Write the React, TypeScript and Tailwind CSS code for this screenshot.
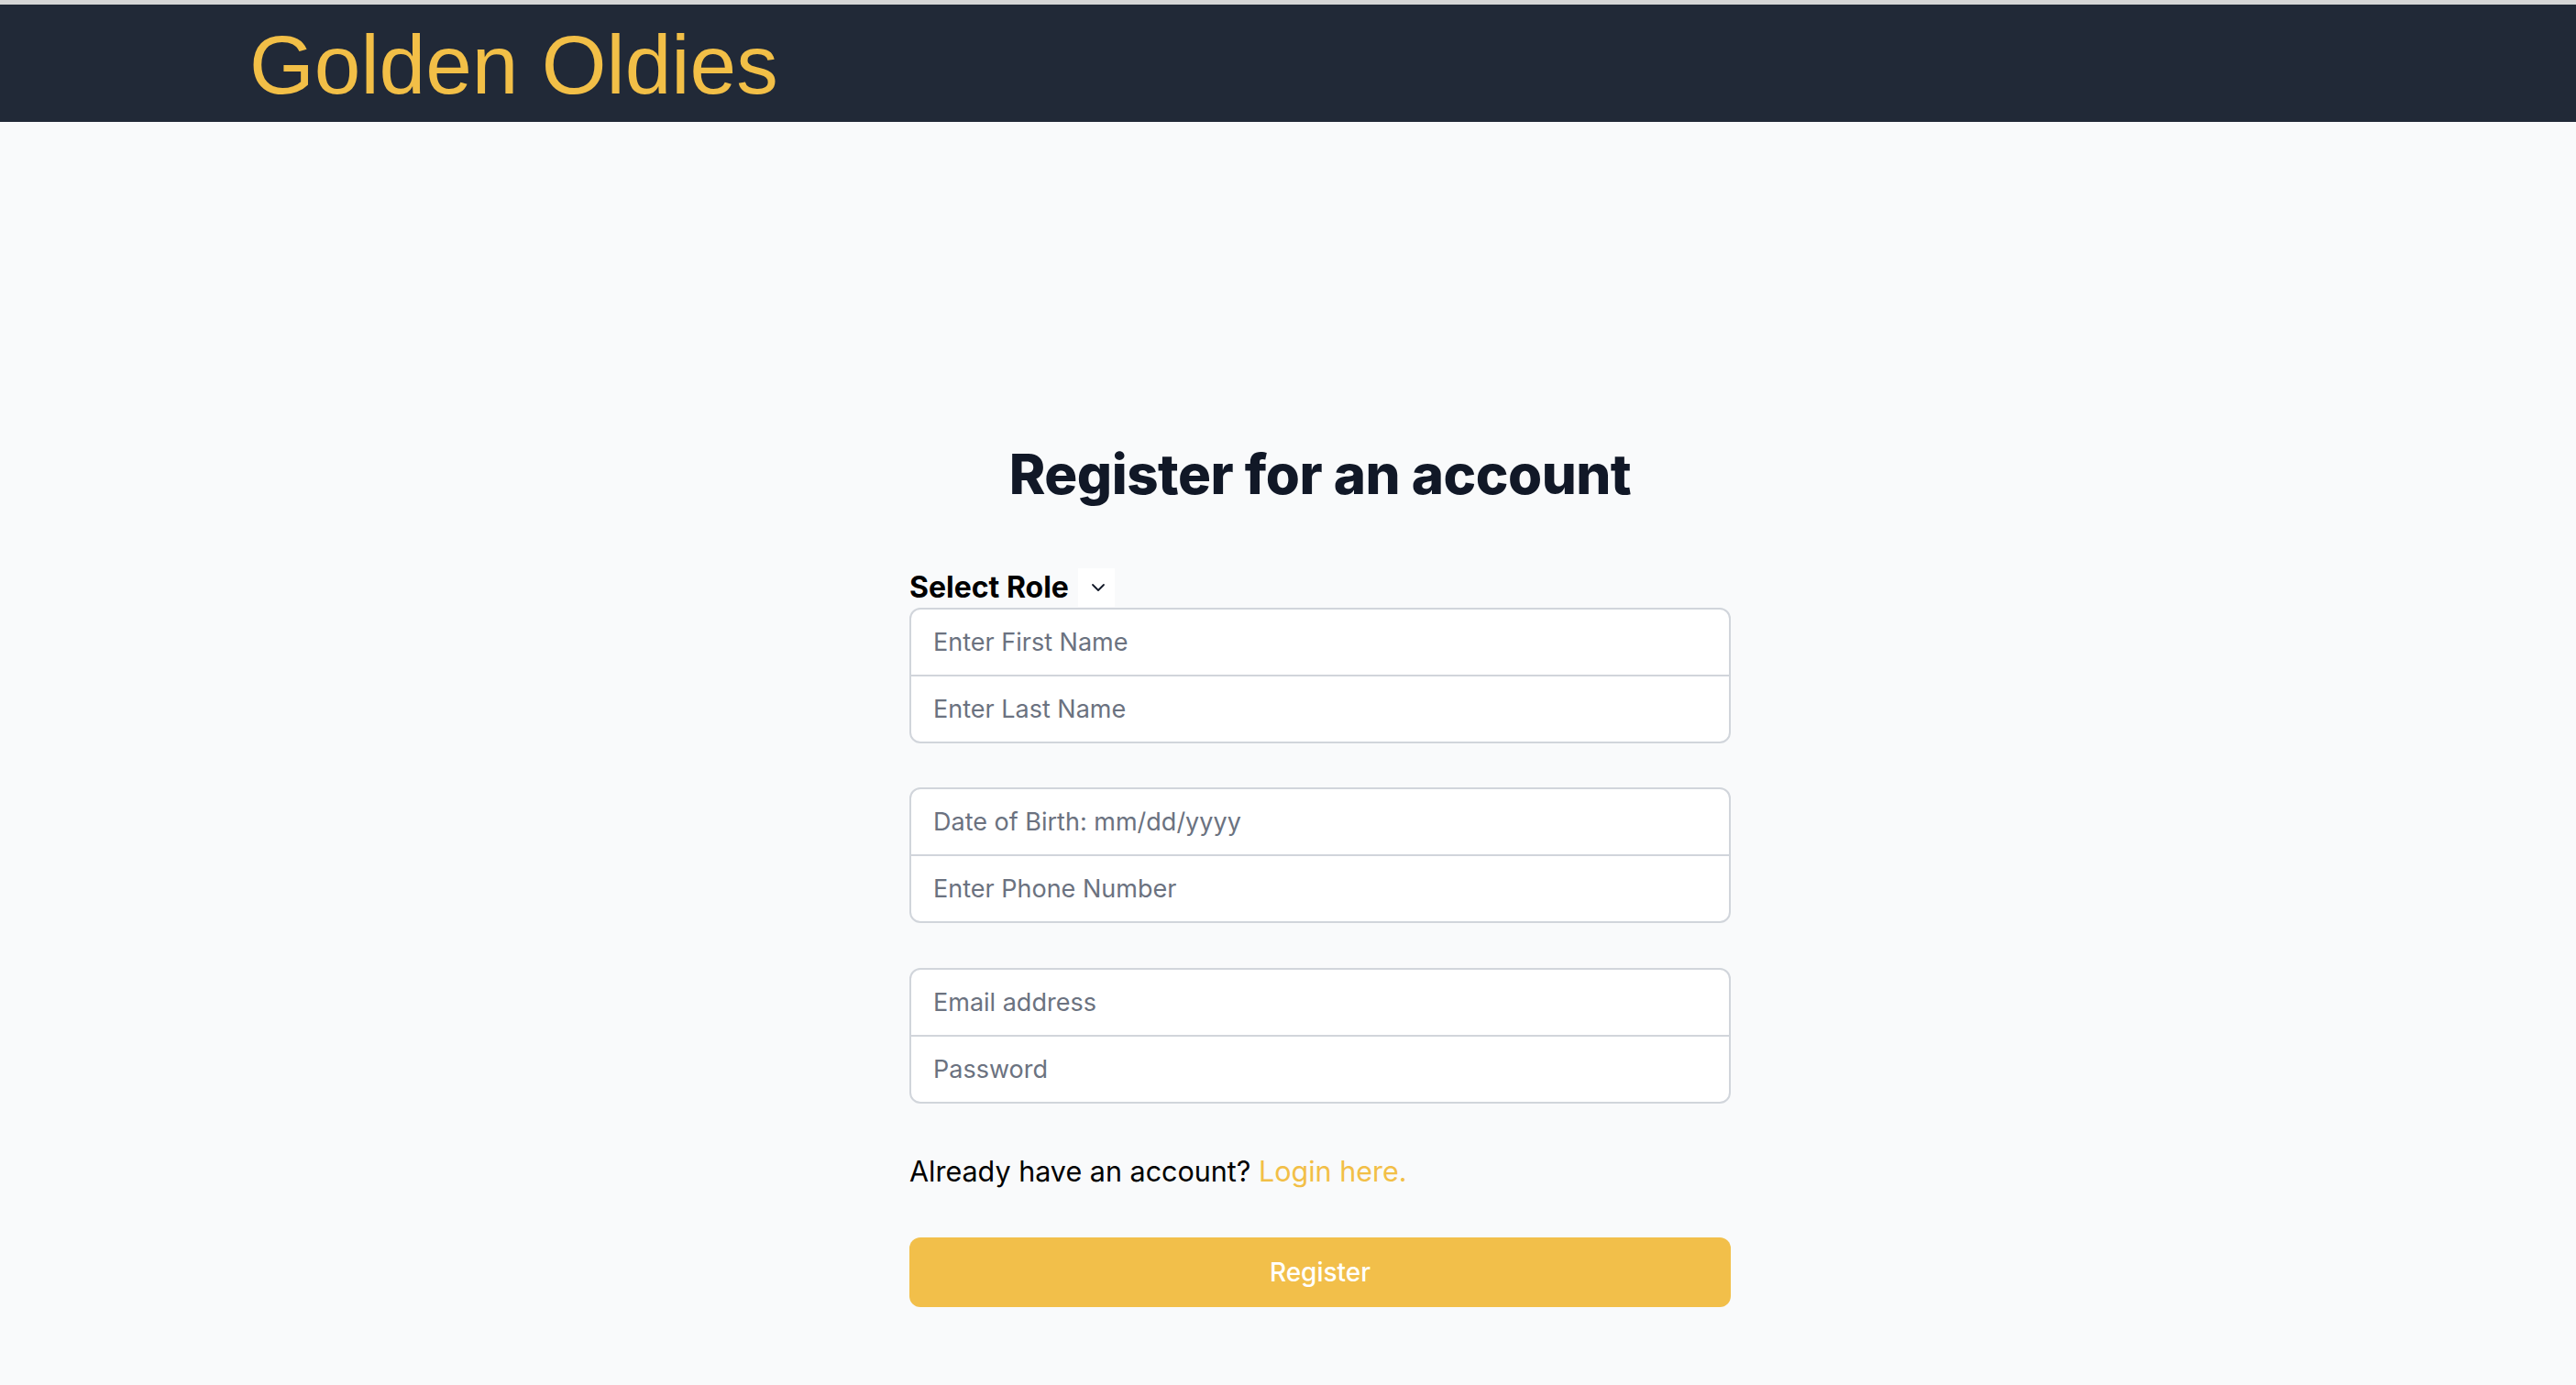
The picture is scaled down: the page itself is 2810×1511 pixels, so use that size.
import { useState } from "react";

const inter = { fontFamily: "Inter, 'Noto Sans', sans-serif" };

function Field({
  placeholder,
  type = "text",
  first,
}: {
  placeholder: string;
  type?: string;
  first?: boolean;
}) {
  return (
    <input
      type={type}
      placeholder={placeholder}
      className={
        "block w-full h-[75px] px-[24px] bg-white border-2 border-[#d1d5db] text-[27px] leading-[40px] text-[#111827] placeholder:text-[#6b7280] outline-none focus:relative focus:z-10 focus:border-[#f2bf4a] " +
        (first ? "rounded-t-[12px]" : "-mt-[2px] rounded-b-[12px]")
      }
    />
  );
}

export default function App() {
  const [role, setRole] = useState("");

  return (
    <div className="min-h-screen bg-[#f9fafb]" style={inter}>
      <div className="h-[5px] bg-[#d6d6d6]" />
      <header className="h-[128px] bg-[#212937] flex items-center pl-[272px]">
        <h1
          className="text-[91px] leading-none pt-[2px] text-[#f2bf47]"
          style={{ fontFamily: "'Liberation Sans', Arial, sans-serif" }}
        >
          Golden Oldies
        </h1>
      </header>

      <main className="flex justify-center pl-[70px] pt-[348px] pb-[80px]">
        <div className="w-[896px] flex flex-col">
          <h2 className="text-center text-[60px] leading-[72px] font-extrabold tracking-[-0.5px] text-[#111827]">
            Register for an account
          </h2>

          <form
            className="mt-[67px] flex flex-col"
            onSubmit={(e) => e.preventDefault()}
          >
            <div className="flex items-center h-[42px]">
              <span className="text-[32px] leading-[42px] font-bold text-black">
                Select Role
              </span>
              <div
                className="ml-[10px] w-[40px] h-[42px] pl-[4px] bg-white flex items-center justify-center cursor-pointer"
                onClick={() => setRole(role ? "" : "user")}
              >
                <svg
                  width="16"
                  height="10"
                  viewBox="0 0 16 10"
                  fill="none"
                  stroke="#111827"
                  strokeWidth="1.8"
                  strokeLinecap="round"
                  strokeLinejoin="round"
                >
                  <path d="M2 2l6 6 6-6" />
                </svg>
              </div>
            </div>

            <div className="mt-px">
              <Field placeholder="Enter First Name" first />
              <Field placeholder="Enter Last Name" />
            </div>

            <div className="mt-[48px]">
              <Field placeholder="Date of Birth: mm/dd/yyyy" first />
              <Field placeholder="Enter Phone Number" type="tel" />
            </div>

            <div className="mt-[49px]">
              <Field placeholder="Email address" type="email" first />
              <Field placeholder="Password" type="password" />
            </div>

            <p className="mt-[52px] text-[30.5px] leading-[44px] text-black">
              Already have an account?{" "}
              <a href="#" className="text-[#f2bf47]">
                Login here.
              </a>
            </p>

            <button
              type="submit"
              className="mt-[50px] h-[76px] w-full rounded-[12px] bg-[#f2bf4a] text-white text-[28px] font-medium hover:brightness-95"
            >
              Register
            </button>
          </form>
        </div>
      </main>
    </div>
  );
}
